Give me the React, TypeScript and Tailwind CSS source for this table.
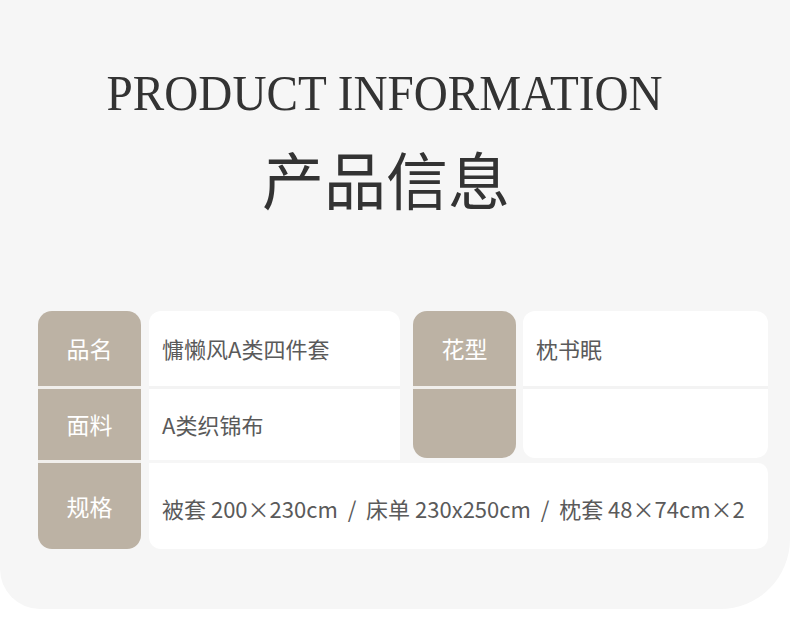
const labelCls =
  "bg-[#bcb2a4] text-white text-[23px] flex items-center justify-center";
const valueCls = "bg-white text-[#5a5a5a] text-[22px] flex items-center pl-[13px]";

const App = () => {
  return (
    <div
      className="w-[790px] h-[631px] bg-white overflow-hidden"
      style={{ fontFamily: '"Noto Sans CJK SC", "Noto Sans", sans-serif' }}
    >
      <div className="bg-[#f6f6f6] h-[609px] rounded-bl-[40px] rounded-br-[70px] pt-[68px]">
        {/* title */}
        <div className="flex justify-center pr-[20px]">
          <div
            className="text-[51px] leading-none text-[#333] whitespace-nowrap scale-x-[0.925]"
            style={{ fontFamily: '"Liberation Serif", serif' }}
          >
            PRODUCT INFORMATION
          </div>
        </div>
        <div className="text-center pr-[18px] mt-[28px] text-[62px] leading-none text-[#333]">
          产品信息
        </div>

        {/* table */}
        <div className="flex ml-[38px] mt-[102px] w-[730px]">
          <div className="w-[103px] flex flex-col rounded-[14px] overflow-hidden">
            <div className={`${labelCls} h-[75px]`}>品名</div>
            <div className="h-[3px] bg-[#f1efec]" />
            <div className={`${labelCls} h-[71px]`}>面料</div>
            <div className="h-[3px] bg-[#f1efec]" />
            <div className={`${labelCls} h-[86px]`}>规格</div>
          </div>

          <div className="ml-[8px] w-[619px] flex flex-col">
            <div className="flex h-[149px]">
              <div className="w-[251px] flex flex-col rounded-t-[12px] overflow-hidden">
                <div className={`${valueCls} h-[75px]`}>慵懒风A类四件套</div>
                <div className="h-[3px] bg-[#f3f3f3]" />
                <div className={`${valueCls} h-[71px]`}>A类织锦布</div>
              </div>
              <div className="ml-[13px] w-[103px] h-[147px] flex flex-col rounded-[14px] overflow-hidden">
                <div className={`${labelCls} h-[75px]`}>花型</div>
                <div className="h-[3px] bg-[#f1efec]" />
                <div className="bg-[#bcb2a4] flex-1" />
              </div>
              <div className="ml-[7px] w-[245px] h-[147px] flex flex-col rounded-[12px] overflow-hidden">
                <div className={`${valueCls} h-[75px]`}>枕书眠</div>
                <div className="h-[3px] bg-[#f3f3f3]" />
                <div className="bg-white flex-1" />
              </div>
            </div>
            <div className="h-[3px]" />
            <div
              className={`${valueCls} h-[86px] rounded-b-[12px] rounded-tr-[10px] pt-[5px] whitespace-pre`}
            >
              {"被套 200×230cm  /  床单 230x250cm  /  枕套 48×74cm×2"}
            </div>
          </div>
        </div>
      </div>
    </div>
  );
};

export default App;
